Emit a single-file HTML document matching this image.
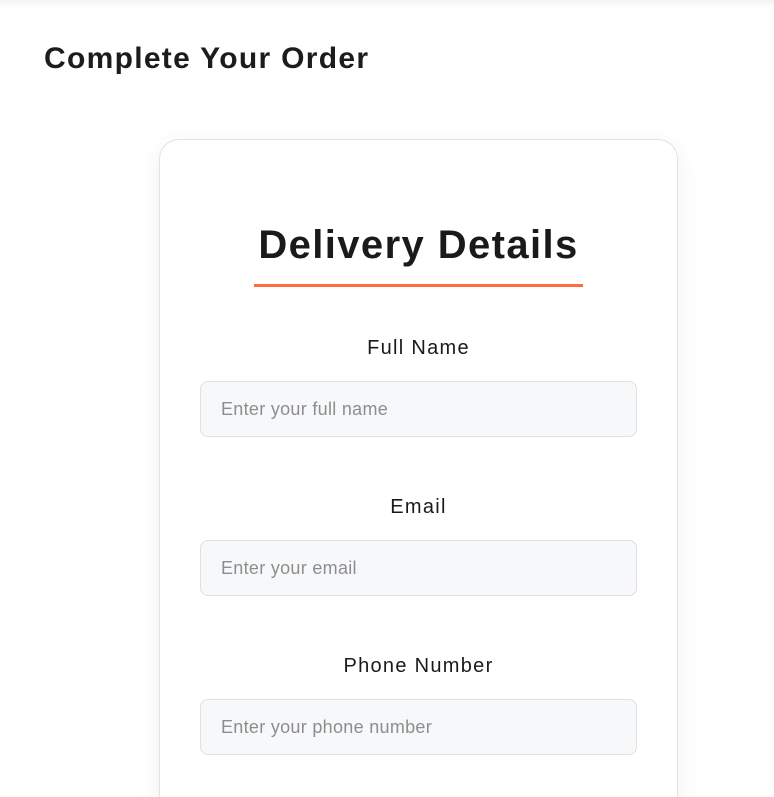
<!DOCTYPE html>
<html style="overflow:hidden;height:797px"><head><style>
body{margin:0;width:774px;height:797px;overflow:hidden;background:#fff;font-family:"Liberation Sans",sans-serif;position:relative}
.top{position:absolute;left:0;top:0;width:774px;height:8px;background:linear-gradient(#f3f3f3,#fff)}
h1{position:absolute;left:44px;top:42px;margin:0;font-size:30px;font-weight:bold;color:#1c1c1c;letter-spacing:1.3px}
.card{position:absolute;left:159px;top:139px;width:517px;height:670px;border:1px solid #e3e3e3;border-bottom:none;border-radius:20px 20px 0 0;box-shadow:0 4px 24px rgba(0,0,0,0.06);background:#fff}
.wrap{position:absolute;left:0;top:0;width:774px;height:797px;overflow:hidden}
h2{position:absolute;left:0;width:517px;top:83px;margin:0;text-align:center;font-size:40px;font-weight:bold;color:#1a1a1a;letter-spacing:1.4px}
.ul{position:absolute;left:94px;top:144px;width:329px;height:3px;background:#ff6b3d}
.lab{position:absolute;left:0;width:517px;text-align:center;font-size:20px;color:#1a1a1a;letter-spacing:1.3px}
.in{position:absolute;left:40px;border:1px solid #e0e0e0;border-radius:8px;background:#f7f8fa;font-size:18px;color:#8d8d8d;line-height:54px;padding-left:20px;box-sizing:border-box;width:437px;height:56px;letter-spacing:0.3px}
</style></head><body>
<div class="top"></div>
<h1>Complete Your Order</h1>
<div class="wrap">
<div class="card">
<h2>Delivery Details</h2>
<div class="ul"></div>
<div class="lab" style="top:197px">Full Name</div>
<div class="in" style="top:241px">Enter your full name</div>
<div class="lab" style="top:356px">Email</div>
<div class="in" style="top:400px">Enter your email</div>
<div class="lab" style="top:515px">Phone Number</div>
<div class="in" style="top:559px">Enter your phone number</div>
</div>
</div>
</body></html>
